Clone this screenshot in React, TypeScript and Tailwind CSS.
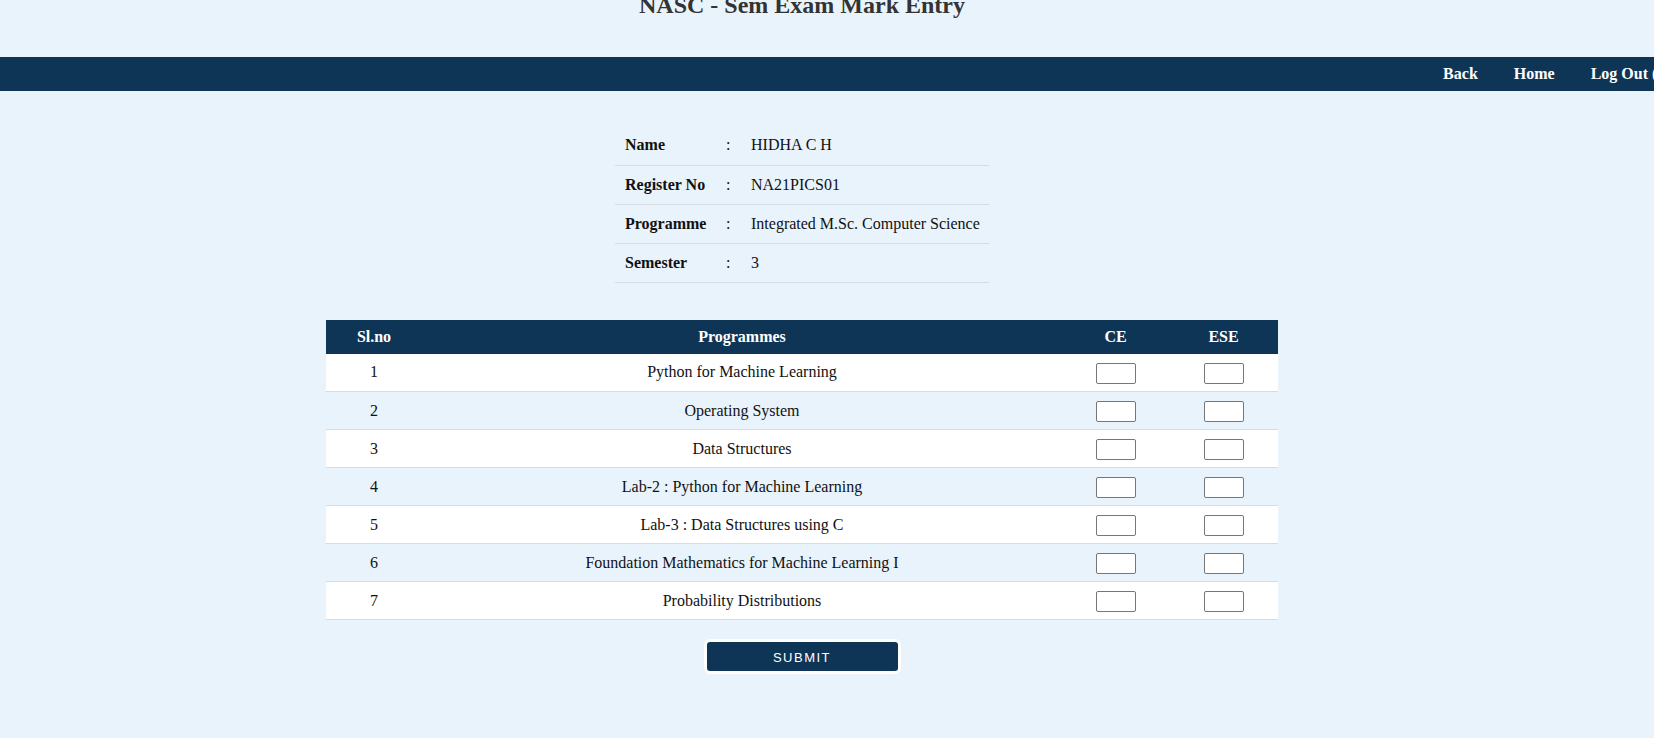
import React from "react";

const details = [
  { label: "Name", value: "HIDHA C H" },
  { label: "Register No", value: "NA21PICS01" },
  { label: "Programme", value: "Integrated M.Sc. Computer Science" },
  { label: "Semester", value: "3" },
];

const papers = [
  "Python for Machine Learning",
  "Operating System",
  "Data Structures",
  "Lab-2 : Python for Machine Learning",
  "Lab-3 : Data Structures using C",
  "Foundation Mathematics for Machine Learning I",
  "Probability Distributions",
];

const MarkInput = () => (
  <input
    type="text"
    className="w-[40px] h-[21px] bg-white border border-[#767676] rounded-[2px] outline-none"
  />
);

const App = () => {
  return (
    <div className="min-h-screen flex flex-col bg-[#e9f3fc] font-['Liberation_Serif',serif] text-[16px] text-[#111] overflow-hidden">
      {/* header */}
      <div className="h-[57px] w-[1604px] flex justify-center overflow-hidden">
        <h1 className="mt-[-9px] text-[24px] leading-[28px] font-bold text-[#333]">
          NASC - Sem Exam Mark Entry
        </h1>
      </div>

      {/* nav bar */}
      <nav className="h-[34px] bg-[#0f3556] flex items-center justify-end overflow-hidden">
        <ul className="flex whitespace-nowrap mr-[-112px] font-bold text-white">
          <li className="px-[18px] cursor-pointer">Back</li>
          <li className="px-[18px] cursor-pointer">Home</li>
          <li className="px-[18px] cursor-pointer">Log Out (HIDHA C H)</li>
        </ul>
      </nav>

      <div className="w-[1604px] flex flex-col items-center">
        {/* student details */}
        <table className="mt-[35px] w-[374px] table-fixed border-collapse whitespace-nowrap">
          <tbody>
            {details.map((d) => (
              <tr key={d.label} className="h-[39px] border-b border-[#d6dce2]">
                <td className="w-[101px] pl-[10px] font-bold">{d.label}</td>
                <td className="w-[25px] pl-[10px]">:</td>
                <td className="w-[248px] pl-[10px]">{d.value}</td>
              </tr>
            ))}
          </tbody>
        </table>

        {/* mark entry */}
        <table className="mt-[37px] w-[952px] table-fixed border-collapse text-center">
          <thead>
            <tr className="h-[34px] bg-[#0f3556] text-white font-bold">
              <th className="w-[96px]">Sl.no</th>
              <th className="w-[640px]">Programmes</th>
              <th className="w-[107px]">CE</th>
              <th className="w-[109px]">ESE</th>
            </tr>
          </thead>
          <tbody>
            {papers.map((p, i) => (
              <tr
                key={p}
                className={
                  "h-[38px] border-b border-[#d6dce2] " +
                  (i % 2 === 0 ? "bg-white" : "bg-[#e9f3fc]")
                }
              >
                <td>{i + 1}</td>
                <td>{p}</td>
                <td className="pt-[2px]">
                  <MarkInput />
                </td>
                <td className="pt-[2px]">
                  <MarkInput />
                </td>
              </tr>
            ))}
          </tbody>
        </table>

        <button
          type="submit"
          className="mt-[19px] w-[197px] h-[35px] pt-[2px] border-[3px] border-white rounded-[6px] bg-[#0f3556] text-white text-[13px] tracking-[1.5px] font-['Liberation_Sans',sans-serif]"
        >
          SUBMIT
        </button>
      </div>
    </div>
  );
};

export default App;
